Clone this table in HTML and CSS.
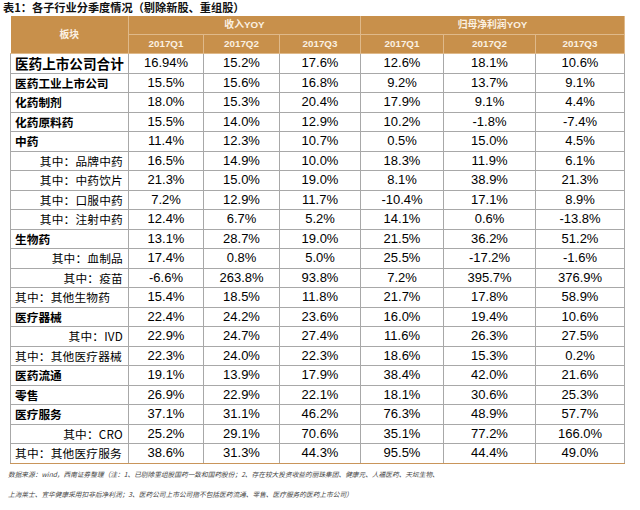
FILE: index.html
```html
<!DOCTYPE html>
<html lang="zh-CN">
<head>
<meta charset="utf-8">
<title>各子行业分季度情况</title>
<link rel="stylesheet" href="styles.css">
</head>
<body>
<div class="caption">表1：各子行业分季度情况（剔除新股、重组股）</div>
<table class="data">
  <colgroup>
    <col class="c-name"><col class="c-a1"><col class="c-a2"><col class="c-a3"><col class="c-b1"><col class="c-b2"><col class="c-b3">
  </colgroup>
  <thead>
    <tr class="h1">
      <th rowspan="2" class="h-name">板块</th>
      <th colspan="3">收入YOY</th>
      <th colspan="3">归母净利润YOY</th>
    </tr>
    <tr class="h2">
      <th>2017Q1</th><th>2017Q2</th><th>2017Q3</th>
      <th>2017Q1</th><th>2017Q2</th><th>2017Q3</th>
    </tr>
  </thead>
  <tbody>
    <tr><td class="lbl big">医药上市公司合计</td><td>16.94%</td><td>15.2%</td><td>17.6%</td><td>12.6%</td><td>18.1%</td><td>10.6%</td></tr>
    <tr><td class="lbl bold">医药工业上市公司</td><td>15.5%</td><td>15.6%</td><td>16.8%</td><td>9.2%</td><td>13.7%</td><td>9.1%</td></tr>
    <tr><td class="lbl bold">化药制剂</td><td>18.0%</td><td>15.3%</td><td>20.4%</td><td>17.9%</td><td>9.1%</td><td>4.4%</td></tr>
    <tr><td class="lbl bold">化药原料药</td><td>15.5%</td><td>14.0%</td><td>12.9%</td><td>10.2%</td><td>-1.8%</td><td>-7.4%</td></tr>
    <tr><td class="lbl bold">中药</td><td>11.4%</td><td>12.3%</td><td>10.7%</td><td>0.5%</td><td>15.0%</td><td>4.5%</td></tr>
    <tr><td class="lbl sub">其中：品牌中药</td><td>16.5%</td><td>14.9%</td><td>10.0%</td><td>18.3%</td><td>11.9%</td><td>6.1%</td></tr>
    <tr><td class="lbl sub">其中：中药饮片</td><td>21.3%</td><td>15.0%</td><td>19.0%</td><td>8.1%</td><td>38.9%</td><td>21.3%</td></tr>
    <tr><td class="lbl sub">其中：口服中药</td><td>7.2%</td><td>12.9%</td><td>11.7%</td><td>-10.4%</td><td>17.1%</td><td>8.9%</td></tr>
    <tr><td class="lbl sub">其中：注射中药</td><td>12.4%</td><td>6.7%</td><td>5.2%</td><td>14.1%</td><td>0.6%</td><td>-13.8%</td></tr>
    <tr><td class="lbl bold">生物药</td><td>13.1%</td><td>28.7%</td><td>19.0%</td><td>21.5%</td><td>36.2%</td><td>51.2%</td></tr>
    <tr><td class="lbl sub">其中：血制品</td><td>17.4%</td><td>0.8%</td><td>5.0%</td><td>25.5%</td><td>-17.2%</td><td>-1.6%</td></tr>
    <tr><td class="lbl sub">其中：疫苗</td><td>-6.6%</td><td>263.8%</td><td>93.8%</td><td>7.2%</td><td>395.7%</td><td>376.9%</td></tr>
    <tr><td class="lbl plain">其中：其他生物药</td><td>15.4%</td><td>18.5%</td><td>11.8%</td><td>21.7%</td><td>17.8%</td><td>58.9%</td></tr>
    <tr><td class="lbl bold">医疗器械</td><td>22.4%</td><td>24.2%</td><td>23.6%</td><td>16.0%</td><td>19.4%</td><td>10.6%</td></tr>
    <tr><td class="lbl sub">其中：IVD</td><td>22.9%</td><td>24.7%</td><td>27.4%</td><td>11.6%</td><td>26.3%</td><td>27.5%</td></tr>
    <tr><td class="lbl plain">其中：其他医疗器械</td><td>22.3%</td><td>24.0%</td><td>22.3%</td><td>18.6%</td><td>15.3%</td><td>0.2%</td></tr>
    <tr><td class="lbl bold">医药流通</td><td>19.1%</td><td>13.9%</td><td>17.9%</td><td>38.4%</td><td>42.0%</td><td>21.6%</td></tr>
    <tr><td class="lbl bold">零售</td><td>26.9%</td><td>22.9%</td><td>22.1%</td><td>18.1%</td><td>30.6%</td><td>25.3%</td></tr>
    <tr><td class="lbl bold">医疗服务</td><td>37.1%</td><td>31.1%</td><td>46.2%</td><td>76.3%</td><td>48.9%</td><td>57.7%</td></tr>
    <tr><td class="lbl sub">其中：CRO</td><td>25.2%</td><td>29.1%</td><td>70.6%</td><td>35.1%</td><td>77.2%</td><td>166.0%</td></tr>
    <tr><td class="lbl plain">其中：其他医疗服务</td><td>38.6%</td><td>31.3%</td><td>44.3%</td><td>95.5%</td><td>44.4%</td><td>49.0%</td></tr>
  </tbody>
</table>
<div class="note">
  <p>数据来源：wind，西南证券整理（注：1、已剔除重组股国药一致和国药股份；2、存在较大投资收益的丽珠集团、健康元、人福医药、天坛生物、</p>
  <p>上海莱士、宜华健康采用扣非后净利润；3、医药公司上市公司指不包括医药流通、零售、医疗服务的医药上市公司）</p>
</div>
</body>
</html>
```
FILE: styles.css
```css
html, body {
  margin: 0;
  padding: 0;
  background: #ffffff;
}
body {
  width: 640px;
  height: 510px;
  overflow: hidden;
  font-family: "Liberation Sans", Arial, sans-serif;
  color: #000;
}
.caption {
  height: 16px;
  line-height: 15px;
  padding-left: 3px;
  font-family: "Noto Sans CJK SC", sans-serif;
  font-weight: 700;
  font-size: 11.2px;
  color: #111;
}
.data {
  margin-left: 10px;
  width: 614px;
  table-layout: fixed;
  border-collapse: collapse;
  border-bottom: 1px solid #c9955a;
}
.c-name { width: 118px; }
.c-a1 { width: 75px; }
.c-a2 { width: 76px; }
.c-a3 { width: 81px; }
.c-b1 { width: 83px; }
.c-b2 { width: 92px; }
.c-b3 { width: 89px; }
.data th {
  background: #c8904b;
  color: #fbf1e2;
  font-family: "Liberation Sans", "Noto Sans CJK SC", sans-serif;
  font-weight: 700;
  font-size: 9.8px;
  line-height: 12px;
  padding: 0;
  height: 18px;
  border: 1px solid #dfb98a;
  text-align: center;
  vertical-align: middle;
}
.data thead tr.h1 th { border-top: none; }
.data th.h-name { border-left: none; }
.data td {
  height: 18.5px;
  padding: 0;
  border: 1px solid #a8a8a8;
  text-align: center;
  vertical-align: middle;
  font-size: 13px;
  line-height: 14px;
}
.data tbody tr:last-child td { border-bottom: 1px solid #c9955a; }
.data td.lbl {
  font-family: "Noto Sans CJK SC", sans-serif;
  text-align: left;
  padding-left: 4px;
  padding-right: 5px;
  font-size: 11.7px;
  white-space: nowrap;
}
.data td.big {
  font-size: 13.6px;
  font-weight: 700;
  padding-right: 0;
}
.data td.bold {
  font-weight: 700;
}
.data td.sub {
  text-align: right;
  font-weight: 400;
  letter-spacing: 0.2px;
}
.data td.plain {
  font-weight: 400;
  letter-spacing: 0.2px;
  padding-right: 0;
}
.note {
  padding-left: 8px;
  font-family: "Noto Sans CJK SC", sans-serif;
  font-style: italic;
  font-size: 6.7px;
  color: #444;
}
.note p {
  margin: 0;
  line-height: 20px;
}
```
